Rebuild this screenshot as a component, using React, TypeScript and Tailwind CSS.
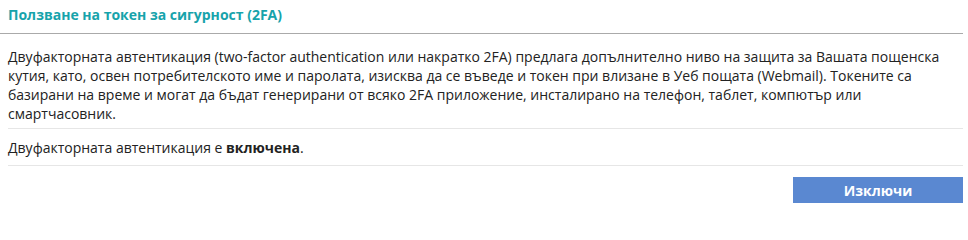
export default function App() {
  return (
    <div className="w-[968px] h-[208px] bg-white font-['Open_Sans',sans-serif] text-[#222]">
      <div className="w-[963px]">
        <div className="h-[34px] border-b border-[#aaaaaa] pl-2 pt-[5px]">
          <h2 className="text-[14px] font-bold leading-[19px] text-[#17a3ab]">
            Ползване на токен за сигурност (2FA)
          </h2>
        </div>
        <div className="pl-2">
          <p className="mt-[13px] pb-[5px] text-[14px] leading-[19px] border-b border-[#e6e6e6]">
            Двуфакторната автентикация (two-factor authentication или накратко 2FA) предлага допълнително ниво на защита за Вашата пощенска кутия, като, освен потребителското име и паролата, изисква да се въведе и токен при влизане в Уеб пощата (Webmail). Токените са базирани на време и могат да бъдат генерирани от всяко 2FA приложение, инсталирано на телефон, таблет, компютър или смартчасовник.
          </p>
          <p className="pt-[9px] pb-[8px] text-[14px] leading-[19px] border-b border-[#e6e6e6]">
            Двуфакторната автентикация е <b>включена</b>.
          </p>
          <div className="mt-[11px] flex justify-end">
            <button
              type="button"
              className="h-[26px] w-[170px] bg-[#5a88d1] text-[14px] font-bold text-white"
            >
              Изключи
            </button>
          </div>
        </div>
      </div>
    </div>
  )
}
